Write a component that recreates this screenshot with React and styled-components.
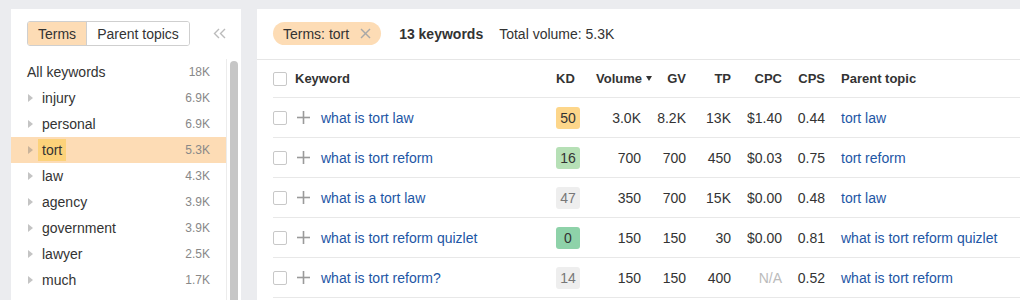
import React from "react";
import styled, { createGlobalStyle } from "styled-components";

const Global = createGlobalStyle`
  html, body { margin: 0; padding: 0; background: #ebecef; overflow: hidden; }
  body { font-family: "Liberation Sans", Arial, Helvetica, sans-serif; color: #333; }
  * { box-sizing: border-box; }
`;

const Page = styled.div`
  display: flex;
  gap: 16px;
  padding: 9px 0 0 11px;
  height: 300px;
  overflow: hidden;
`;

const Side = styled.aside`
  width: 230px;
  flex: none;
  background: #fff;
  display: flex;
  flex-direction: column;
  overflow: hidden;
`;

const SideHead = styled.div`
  height: 50px;
  flex: none;
  display: flex;
  align-items: flex-start;
  justify-content: space-between;
  padding: 12px 15px 0 16px;
`;

const Segmented = styled.div`
  display: flex;
  height: 25px;
  border: 1px solid #cfcfcf;
  border-radius: 3px;
  overflow: hidden;
`;

const Seg = styled.div`
  display: flex;
  align-items: center;
  padding: 0 10px;
  font-size: 14px;
  color: #333;
  background: ${(p) => (p.$active ? "#fddcb5" : "#fff")};
  & + & { border-left: 1px solid #cfcfcf; }
`;

const Collapse = styled.div`
  display: flex;
  align-items: center;
  height: 25px;
  color: #bbb;
`;

const SideBody = styled.div`
  flex: 1;
  min-height: 0;
  display: flex;
`;

const List = styled.div`
  flex: 1;
  display: flex;
  flex-direction: column;
`;

const Track = styled.div`
  width: 15px;
  flex: none;
  border-left: 1px solid #ececec;
  padding: 2px 0 0 3px;
`;

const Thumb = styled.div`
  width: 8px;
  height: 260px;
  border-radius: 4px;
  background: #c6c6c6;
`;

const Item = styled.div`
  height: 26px;
  flex: none;
  display: flex;
  align-items: center;
  padding: 0 16px;
  background: ${(p) => (p.$selected ? "#fddcb5" : "transparent")};
`;

const Caret = styled.span`
  width: 0;
  height: 0;
  border-top: 4px solid transparent;
  border-bottom: 4px solid transparent;
  border-left: 5px solid ${(p) => (p.$selected ? "#c9b39a" : "#c4c4c4")};
  margin: 0 9px 0 1px;
  flex: none;
`;

const ItemLabel = styled.span`
  font-size: 14px;
  color: #333;
  flex: 1;
  display: flex;
  align-items: center;
`;

const Mark = styled.span`
  background: #fcd27a;
  height: 22px;
  display: inline-flex;
  align-items: center;
  padding: 0 4px;
  margin-left: -4px;
`;

const Count = styled.span`
  font-size: 12px;
  color: #888;
`;

const Main = styled.main`
  flex: 1;
  background: #fff;
  display: flex;
  flex-direction: column;
`;

const Toolbar = styled.div`
  height: 51px;
  flex: none;
  border-bottom: 1px solid #e6e6e6;
  display: flex;
  align-items: center;
  padding: 0 16px 1px 16px;
  font-size: 14px;
`;

const Chip = styled.div`
  display: flex;
  align-items: center;
  gap: 11px;
  height: 23px;
  padding: 0 10px;
  border-radius: 12px;
  background: #fddcb5;
  color: #333;
  margin-right: 18px;
`;

const Strong = styled.span`
  font-weight: bold;
  color: #333;
  margin-right: 16px;
`;

const Muted = styled.span`
  color: #333;
`;

const Table = styled.div`
  padding-left: 16px;
`;

const Row = styled.div`
  display: grid;
  grid-template-columns: 22px 261px 34px 51px 45px 45px 51px 43px 1fr;
  align-items: center;
  height: ${(p) => (p.$head ? "38px" : "40px")};
  border-bottom: 1px solid #e8e8e8;
  font-size: ${(p) => (p.$head ? "13px" : "14px")};
  font-weight: ${(p) => (p.$head ? "bold" : "normal")};
`;

const Cell = styled.div`
  text-align: ${(p) => (p.$right ? "right" : "left")};
  padding-left: ${(p) => (p.$pad ? "16px" : "0")};
  color: ${(p) => p.$color || "#333"};
  white-space: nowrap;
  display: ${(p) => (p.$flex ? "flex" : "block")};
  align-items: center;
`;

const Box = styled.span`
  display: block;
  width: 14px;
  height: 14px;
  border: 1px solid #c8c8c8;
  border-radius: 2px;
  background: #fff;
`;

const Link = styled.a`
  color: #1d56a5;
  text-decoration: none;
`;

const PlusWrap = styled.span`
  display: inline-flex;
  margin: 0 11px 0 2px;
`;

const Badge = styled.span`
  display: inline-flex;
  align-items: center;
  justify-content: center;
  width: 24px;
  height: 22px;
  border-radius: 3px;
  background: ${(p) => p.$bg};
  color: ${(p) => p.$fg};
`;

const SortArrow = styled.span`
  display: inline-block;
  width: 0;
  height: 0;
  border-left: 3.5px solid transparent;
  border-right: 3.5px solid transparent;
  border-top: 5px solid #333;
  margin: 0 -11px 2px 4px;
  vertical-align: middle;
`;

const Chevrons = () => (
  <svg width="13" height="11" viewBox="0 0 13 11" fill="none" stroke="#bbb" strokeWidth="1.4">
    <polyline points="6,1 1.5,5.5 6,10" />
    <polyline points="12,1 7.5,5.5 12,10" />
  </svg>
);

const Close = () => (
  <svg width="11" height="11" viewBox="0 0 11 11" stroke="#a8a8a8" strokeWidth="1.4">
    <line x1="1" y1="1" x2="10" y2="10" />
    <line x1="10" y1="1" x2="1" y2="10" />
  </svg>
);

const Plus = () => (
  <svg width="13" height="13" viewBox="0 0 13 13" stroke="#9a9a9a" strokeWidth="1.6">
    <line x1="6.5" y1="0" x2="6.5" y2="13" />
    <line x1="0" y1="6.5" x2="13" y2="6.5" />
  </svg>
);

const terms = [
  { label: "injury", count: "6.9K" },
  { label: "personal", count: "6.9K" },
  { label: "tort", count: "5.3K", selected: true },
  { label: "law", count: "4.3K" },
  { label: "agency", count: "3.9K" },
  { label: "government", count: "3.9K" },
  { label: "lawyer", count: "2.5K" },
  { label: "much", count: "1.7K" },
];

const kdStyles = {
  50: { bg: "#fdd68a", fg: "#333" },
  16: { bg: "#b6e0b6", fg: "#333" },
  47: { bg: "#eeeeee", fg: "#777" },
  0: { bg: "#8ed2a9", fg: "#333" },
  14: { bg: "#eeeeee", fg: "#777" },
};

const rows = [
  { kw: "what is tort law", kd: 50, vol: "3.0K", gv: "8.2K", tp: "13K", cpc: "$1.40", cps: "0.44", parent: "tort law" },
  { kw: "what is tort reform", kd: 16, vol: "700", gv: "700", tp: "450", cpc: "$0.03", cps: "0.75", parent: "tort reform" },
  { kw: "what is a tort law", kd: 47, vol: "350", gv: "700", tp: "15K", cpc: "$0.00", cps: "0.48", parent: "tort law" },
  { kw: "what is tort reform quizlet", kd: 0, vol: "150", gv: "150", tp: "30", cpc: "$0.00", cps: "0.81", parent: "what is tort reform quizlet" },
  { kw: "what is tort reform?", kd: 14, vol: "150", gv: "150", tp: "400", cpc: "N/A", cps: "0.52", parent: "what is tort reform" },
];

export default function App() {
  return (
    <>
      <Global />
      <Page>
        <Side>
          <SideHead>
            <Segmented>
              <Seg $active>Terms</Seg>
              <Seg>Parent topics</Seg>
            </Segmented>
            <Collapse>
              <Chevrons />
            </Collapse>
          </SideHead>
          <SideBody>
            <List>
              <Item>
                <ItemLabel>All keywords</ItemLabel>
                <Count>18K</Count>
              </Item>
              {terms.map((t) => (
                <Item key={t.label} $selected={t.selected}>
                  <Caret $selected={t.selected} />
                  <ItemLabel>{t.selected ? <Mark>{t.label}</Mark> : t.label}</ItemLabel>
                  <Count>{t.count}</Count>
                </Item>
              ))}
            </List>
            <Track>
              <Thumb />
            </Track>
          </SideBody>
        </Side>
        <Main>
          <Toolbar>
            <Chip>
              Terms: tort
              <Close />
            </Chip>
            <Strong>13 keywords</Strong>
            <Muted>Total volume: 5.3K</Muted>
          </Toolbar>
          <Table>
            <Row $head>
              <Cell $flex><Box /></Cell>
              <Cell>Keyword</Cell>
              <Cell>KD</Cell>
              <Cell $right>Volume<SortArrow /></Cell>
              <Cell $right>GV</Cell>
              <Cell $right>TP</Cell>
              <Cell $right>CPC</Cell>
              <Cell $right>CPS</Cell>
              <Cell $pad>Parent topic</Cell>
            </Row>
            {rows.map((r) => (
              <Row key={r.kw}>
                <Cell $flex><Box /></Cell>
                <Cell $flex>
                  <PlusWrap><Plus /></PlusWrap>
                  <Link>{r.kw}</Link>
                </Cell>
                <Cell $flex>
                  <Badge $bg={kdStyles[r.kd].bg} $fg={kdStyles[r.kd].fg}>{r.kd}</Badge>
                </Cell>
                <Cell $right>{r.vol}</Cell>
                <Cell $right>{r.gv}</Cell>
                <Cell $right>{r.tp}</Cell>
                <Cell $right $color={r.cpc === "N/A" ? "#bbb" : undefined}>{r.cpc}</Cell>
                <Cell $right>{r.cps}</Cell>
                <Cell $pad><Link>{r.parent}</Link></Cell>
              </Row>
            ))}
          </Table>
        </Main>
      </Page>
    </>
  );
}
